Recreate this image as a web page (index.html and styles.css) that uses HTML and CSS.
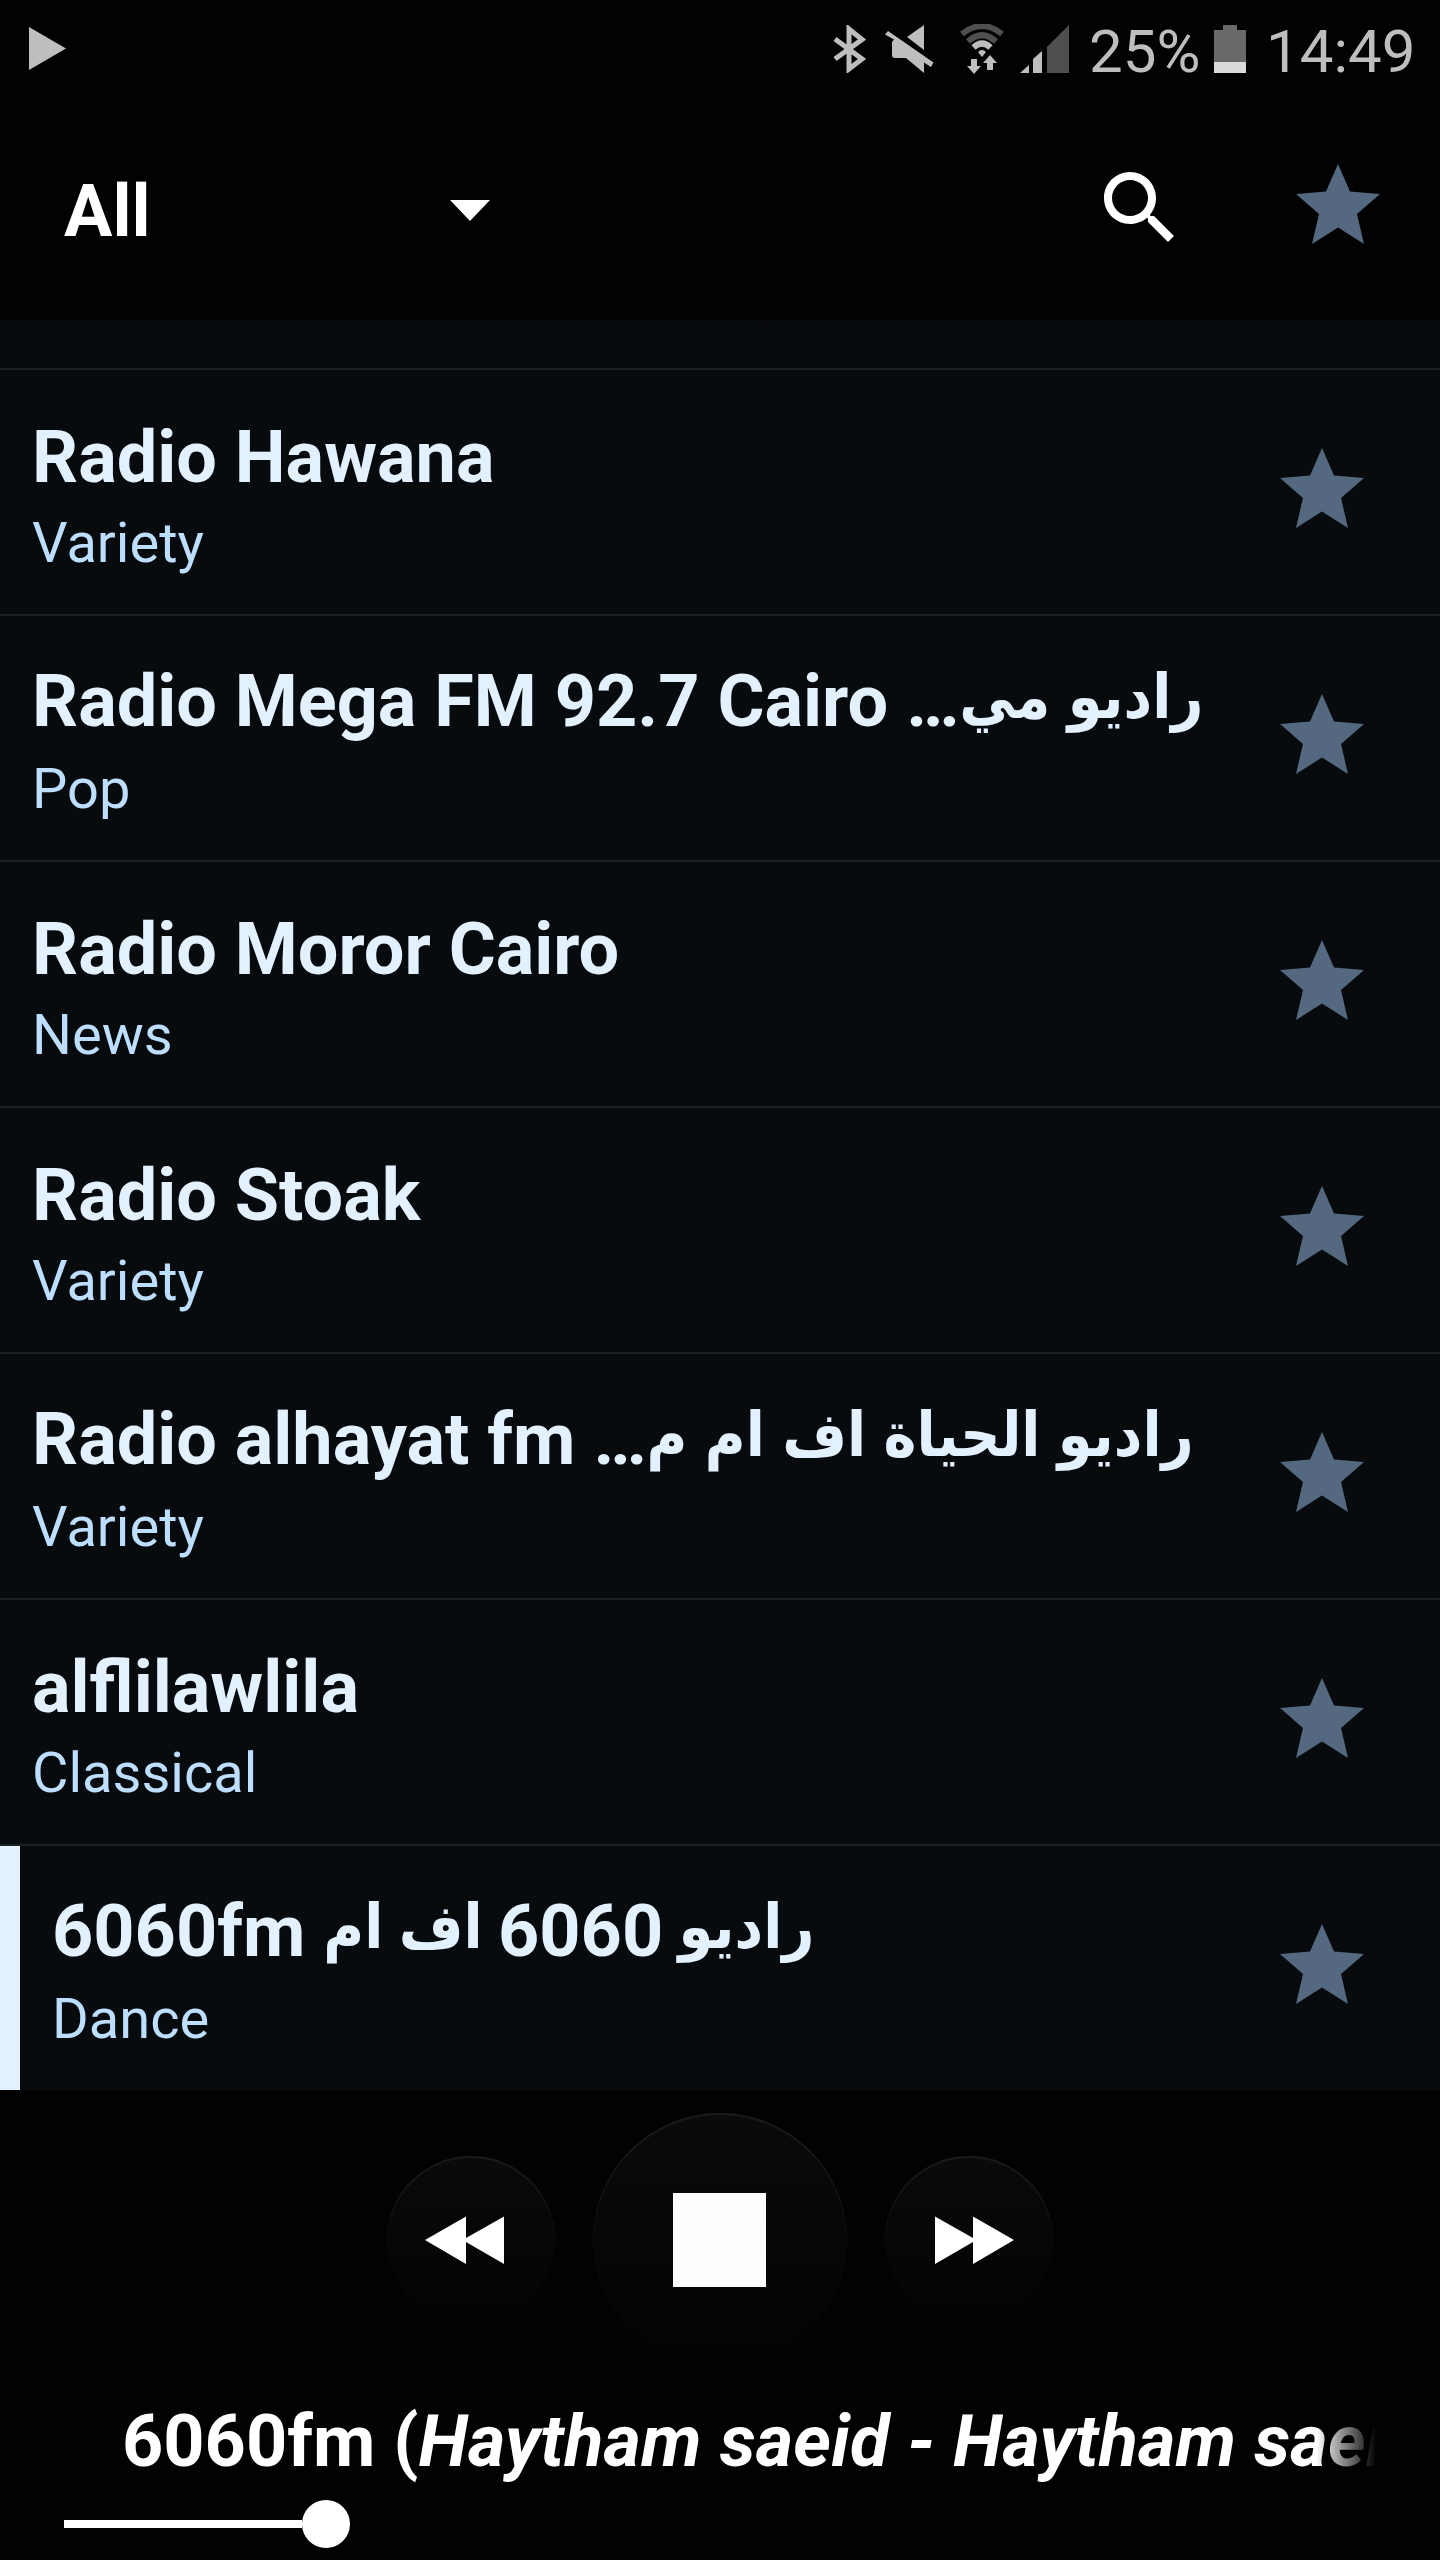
FILE: index.html
```html
<!DOCTYPE html>
<html lang="en">
<head>
    <meta charset="UTF-8">
    <meta name="viewport" content="width=device-width, initial-scale=1.0">
    <title>Radio</title>
    <link rel="stylesheet" href="styles.css">
</head>
<body>
    <!-- Shared icons -->
    <svg class="sprite" aria-hidden="true">
        <symbol id="star" viewBox="0 0 84 80">
            <path d="M42 0 L54 27.5 L84 30 L61 50 L68 80 L42 63.5 L16 80 L23 50 L0 30 L30 27.5 Z"/>
        </symbol>
    </svg>

    <div class="app">
        <!-- Status bar -->
        <div class="status-bar">
            <svg class="play-icon" width="38" height="43" viewBox="0 0 38 43"><path d="M0 0 L37 21.5 L0 43 Z"/></svg>
            <svg class="bluetooth" width="33" height="48" viewBox="0 0 33 48">
                <path d="M2 14 L29 34 L16 44 V4 L29 14.5 L2 34"/>
            </svg>
            <svg class="mute" width="49" height="48" viewBox="0 0 49 48">
                <path d="M3 6 L48.5 37.5 L46 42 L39 37.5 V48 L21 33 H10 Q7 33 7 30 V17 L9 14.5 L0 9.5 Z"/>
                <path d="M22 12 L39 0 V25 Z"/>
            </svg>
            <svg class="wifi" width="44" height="50" viewBox="0 0 44 50">
                <path class="arc dim" d="M2 10 Q22 -6 42 10"/>
                <path class="arc dim" d="M8 17.5 Q22 5 36 17.5"/>
                <path class="arc" d="M13.5 23.5 Q22 15.5 30.5 23.5"/>
                <path d="M18 28 Q22 24 26 28 L22 33 Z"/>
                <path d="M11 35 H17 V42 H21 L14 50 L7 42 H11 Z"/>
                <path d="M27 46 H33 V39 H37 L30 31 L23 39 H27 Z"/>
            </svg>
            <svg class="signal" width="49" height="48" viewBox="0 0 49 48">
                <path d="M0 48 L9 40 V48 Z M13 48 V34 L22 26 V48 Z"/>
                <path class="dim" d="M27 48 V22 L49 0 V48 Z"/>
            </svg>
            <span class="percent">25%</span>
            <svg class="battery" width="32" height="48" viewBox="0 0 32 48">
                <path class="dim" d="M9 0 H23 V5 H32 V37 H0 V5 H9 Z"/>
                <path class="charge" d="M0 37 H32 V48 H0 Z"/>
            </svg>
            <span class="clock">14:49</span>
        </div>

        <!-- Toolbar with genre filter -->
        <div class="toolbar">
            <span class="filter">All</span>
            <svg class="arrow" width="40" height="21" viewBox="0 0 40 21"><path d="M0 0 H40 L20 21 Z"/></svg>
            <svg class="search" width="96" height="96" viewBox="0 0 24 24">
                <path d="M15.5 14h-.79l-.28-.27C15.41 12.59 16 11.11 16 9.5 16 5.91 13.09 3 9.5 3S3 5.91 3 9.5 5.91 16 9.5 16c1.61 0 3.09-.59 4.23-1.57l.27.28v.79l5 4.99L20.49 19l-4.99-5zm-6 0C7.01 14 5 11.99 5 9.5S7.01 5 9.5 5 14 7.01 14 9.5 11.99 14 9.5 14z"/>
            </svg>
            <svg class="star"><use href="#star"/></svg>
        </div>

        <!-- Station list -->
        <div class="list">
            <div class="peek"></div>
            <div class="station">
                <div class="info">
                    <div class="name">Radio Hawana</div>
                    <div class="genre">Variety</div>
                </div>
                <svg class="star"><use href="#star"/></svg>
            </div>
            <div class="station">
                <div class="info mixed">
                    <div class="name">Radio Mega FM 92.7 Cairo <bdi dir="rtl"><span class="arabic">راديو مي</span>…</bdi></div>
                    <div class="genre">Pop</div>
                </div>
                <svg class="star"><use href="#star"/></svg>
            </div>
            <div class="station">
                <div class="info">
                    <div class="name">Radio Moror Cairo</div>
                    <div class="genre">News</div>
                </div>
                <svg class="star"><use href="#star"/></svg>
            </div>
            <div class="station">
                <div class="info">
                    <div class="name">Radio Stoak</div>
                    <div class="genre">Variety</div>
                </div>
                <svg class="star"><use href="#star"/></svg>
            </div>
            <div class="station">
                <div class="info mixed">
                    <div class="name">Radio alhayat fm <bdi dir="rtl"><span class="arabic">راديو الحياة اف ام م</span>…</bdi></div>
                    <div class="genre">Variety</div>
                </div>
                <svg class="star"><use href="#star"/></svg>
            </div>
            <div class="station">
                <div class="info">
                    <div class="name">alflilawlila</div>
                    <div class="genre">Classical</div>
                </div>
                <svg class="star"><use href="#star"/></svg>
            </div>
            <div class="station playing">
                <div class="info mixed">
                    <div class="name">6060fm <bdi dir="rtl"><span class="arabic">راديو </span>6060<span class="arabic"> اف ام</span></bdi></div>
                    <div class="genre">Dance</div>
                </div>
                <svg class="star"><use href="#star"/></svg>
            </div>
        </div>

        <!-- Player -->
        <div class="player">
            <div class="controls">
                <div class="round">
                    <svg width="168" height="168" viewBox="0 0 168 168"><path d="M38 84 L79 60.5 V82 L117 60.5 V108 L79 86 V108 Z"/></svg>
                </div>
                <div class="round big"><div class="stop"></div></div>
                <div class="round">
                    <svg width="168" height="168" viewBox="0 0 168 168"><path d="M129 84 L88 60.5 V82 L50 60.5 V108 L88 86 V108 Z"/></svg>
                </div>
            </div>
            <div class="now-playing">6060fm (<i>Haytham saeid - Haytham saei</i></div>
            <div class="volume">
                <div class="level"></div>
                <div class="thumb"></div>
            </div>
        </div>
    </div>
</body>
</html>
```
FILE: styles.css
```css
* {
    box-sizing: border-box;
}

body {
    margin: 0;
    background: #000;
    font-family: Roboto, "DejaVu Sans", sans-serif;
}

svg {
    display: block;
    flex: none;
}

.sprite {
    position: absolute;
    width: 0;
    height: 0;
}

.app {
    width: 1440px;
    height: 2560px;
    display: flex;
    flex-direction: column;
    overflow: hidden;
    background: #020202;
}

/* Status bar */
.status-bar {
    height: 96px;
    padding: 2px 24px 0 29px;
    display: flex;
    align-items: center;
    color: #bebebe;
    fill: #bebebe;
    font-size: 60px;
    line-height: 96px;
}

.status-bar span {
    padding-top: 5px;
    white-space: nowrap;
}

.status-bar .dim {
    fill: #4f4f4f;
}

.play-icon {
    margin-top: -2px;
}

.bluetooth {
    margin-left: 766px;
    fill: none;
    stroke: #bebebe;
    stroke-width: 5;
}

.mute {
    margin-left: 19px;
}

.wifi {
    margin-left: 26px;
}

.wifi .arc {
    fill: none;
    stroke: #bebebe;
    stroke-width: 6;
}

.wifi .arc.dim {
    fill: none;
    stroke: #4f4f4f;
}

.signal {
    margin-left: 16px;
}

.percent {
    width: 125px;
    margin-left: 20px;
}

.battery .dim {
    fill: #696969;
}

.battery .charge {
    fill: #dadada;
}

.clock {
    margin-left: 20px;
}

/* Toolbar */
.toolbar {
    height: 224px;
    padding: 0 60px 0 64px;
    display: flex;
    align-items: flex-start;
    color: #fff;
    fill: #fff;
}

.filter {
    width: 386px;
    margin-top: 74px;
    font-size: 72px;
    font-weight: bold;
    line-height: 84px;
}

.arrow {
    margin-top: 104px;
}

.search {
    margin: 64px 108px 0 auto;
}

.star {
    width: 84px;
    height: 80px;
    fill: #54697f;
}

.toolbar .star {
    margin-top: 68px;
}

/* Station list */
.list {
    height: 1770px;
    background: #070b0e;
}

.peek {
    height: 50px;
    background: linear-gradient(#08090d, #070b0e 14px);
    border-bottom: 2px solid #1c2023;
}

.station {
    height: 246px;
    padding: 0 76px 0 32px;
    display: flex;
    border-bottom: 2px solid #1c2023;
}

.station .star {
    margin-top: 78px;
}

.info {
    flex: 1;
    min-width: 0;
    padding-top: 46px;
}

.name {
    height: 84px;
    color: #e3f1ff;
    font-size: 72px;
    font-weight: bold;
    line-height: 84px;
    white-space: nowrap;
}

.genre {
    margin-top: 10px;
    color: #bddeff;
    font-size: 56px;
    line-height: 66px;
}

/* Names with arabic script sit a little higher */
.mixed {
    padding-top: 44px;
}

.mixed .genre {
    margin-top: 12px;
}

.arabic {
    font-family: "DejaVu Sans Condensed", "DejaVu Sans", sans-serif;
    font-stretch: condensed;
    font-size: 62px;
    line-height: 0;
    vertical-align: 8px;
    word-spacing: -2px;
}

.playing {
    height: 244px;
    border-left: 20px solid #e3f1ff;
    border-bottom: 0;
}

.playing .arabic {
    word-spacing: -4px;
}

/* Player */
.player {
    height: 470px;
    padding-top: 23px;
}

.controls {
    height: 254px;
    display: flex;
    justify-content: center;
    align-items: center;
    gap: 38px;
}

.round {
    width: 168px;
    height: 168px;
    display: flex;
    justify-content: center;
    align-items: center;
    border-radius: 50%;
    background: linear-gradient(#090b0b, #020303);
    box-shadow: inset 0 2px 1px #1b1b1b;
    fill: #fff;
}

.big {
    width: 254px;
    height: 254px;
}

.stop {
    width: 93px;
    height: 94px;
    margin-right: 1px;
    background: #fdfdfd;
}

.now-playing {
    width: 1312px;
    height: 110px;
    margin: 33px 64px 0;
    padding-left: 58px;
    overflow: hidden;
    color: #fff;
    font-size: 72px;
    font-weight: bold;
    line-height: 84px;
    white-space: nowrap;
    -webkit-mask-image: linear-gradient(to right, #000 1252px, transparent 1312px);
    mask-image: linear-gradient(to right, #000 1252px, transparent 1312px);
}

.now-playing i {
    letter-spacing: 0.2px;
}

.volume {
    height: 48px;
    margin: -10px 64px 0;
    display: flex;
    align-items: center;
}

.level {
    width: 238px;
    height: 8px;
    background: #fff;
}

.thumb {
    width: 48px;
    height: 48px;
    border-radius: 50%;
    background: #fff;
}
```
